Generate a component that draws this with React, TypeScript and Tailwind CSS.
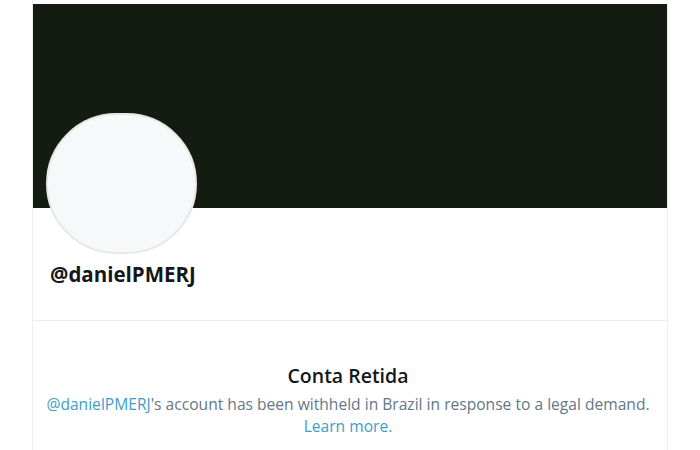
const App = () => {
	return (
		<main className="w-[700px] h-[450px] overflow-hidden bg-white font-['Open_Sans',sans-serif]">
			<section className="ml-[32px] w-[636px] h-full flex flex-col border-x border-[#eceef0]">
				<div className="mt-[4px] h-[204px] w-full bg-[#141b10]" />

				<section className="flex flex-col px-[13px] border-b border-[#e9ebed] h-[113px]">
					<div className="-mt-[95px] w-[151px] h-[141px] rounded-full bg-[#f7f8fa] border-2 border-[#e6e8e6]" />
					<h2 className="mt-[6px] ml-[4px] text-[20.5px] font-bold leading-[28px] text-[#14171a]">
						@danielPMERJ
					</h2>
				</section>

				<section className="flex flex-col items-center pt-[42px] pr-[4px]">
					<h3 className="text-[19.5px] font-semibold leading-[26px] text-[#14171a]">
						Conta Retida
					</h3>
					<p className="mt-[4px] text-center text-[15.6px] leading-[22px] text-[#657786]">
						<span className="text-[#3f9ec7]">@danielPMERJ</span>'s account has
						been withheld in Brazil in response to a legal demand.
						<br />
						<span className="text-[#3f9ec7]">Learn more.</span>
					</p>
				</section>
			</section>
		</main>
	);
};

export default App;
